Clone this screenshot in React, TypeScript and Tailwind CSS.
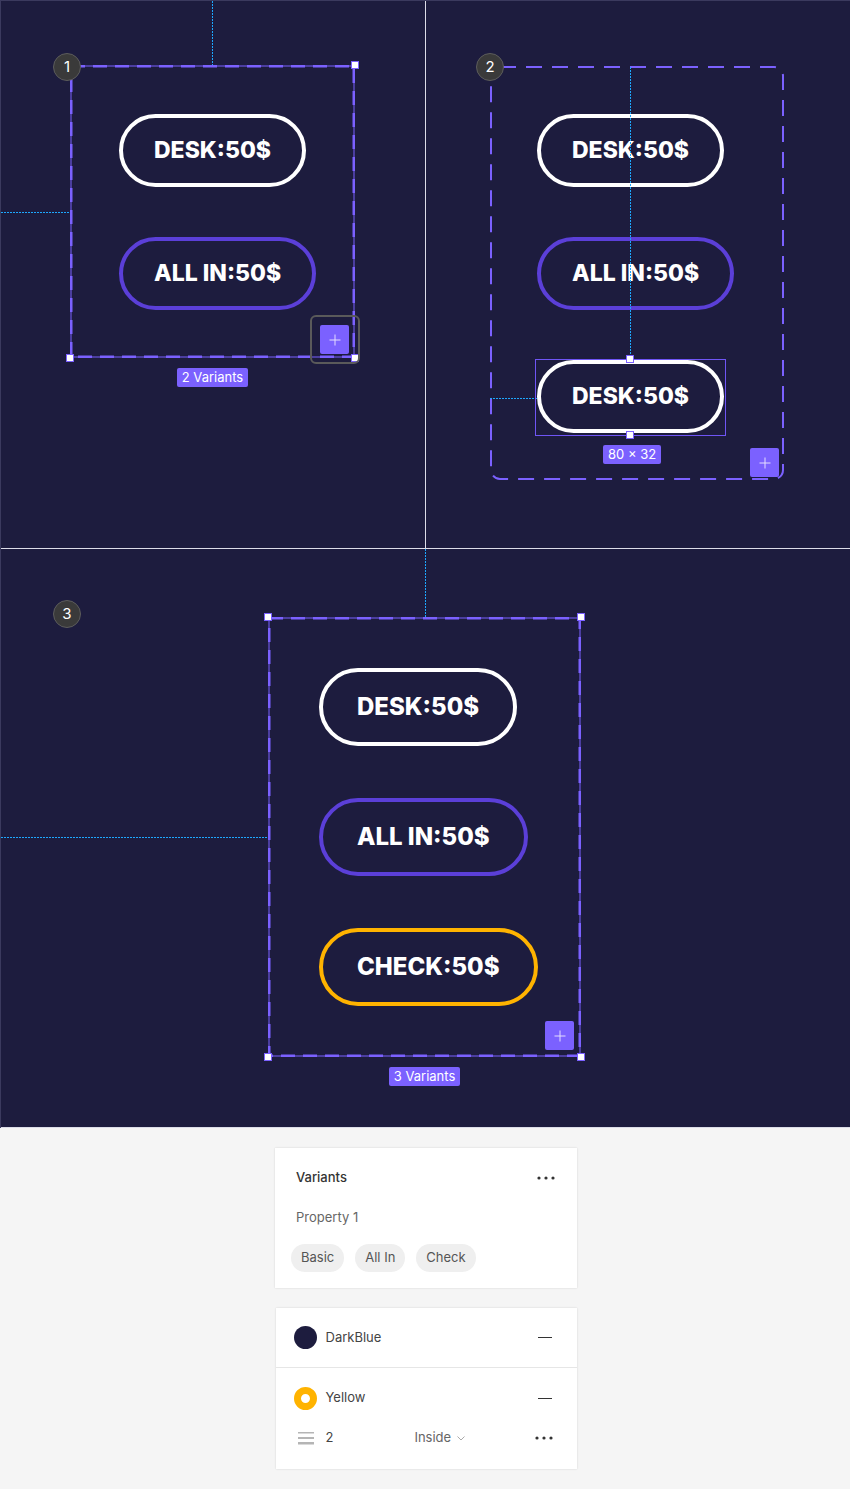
import React from 'react'

const PURPLE = '#7b61ff'

function Pill({ label, tone, big }: { label: string; tone: 'white' | 'purple' | 'yellow'; big?: boolean }) {
  const border =
    tone === 'white' ? 'border-white' : tone === 'purple' ? 'border-[#5b3fd8]' : 'border-[#ffb300]'
  return (
    <div
      className={`flex items-center justify-center rounded-full border-4 ${border} ${
        big ? 'h-[78px] px-[34px] text-[24px]' : 'h-[73px] px-[31px] text-[23px]'
      } font-extrabold text-white`}
      style={{ fontFamily: 'Inter, "Open Sans", sans-serif' }}
    >
      {label}
    </div>
  )
}

function Badge({ n, className }: { n: number; className: string }) {
  return (
    <div
      className={`absolute flex h-[28px] w-[28px] items-center justify-center rounded-full border border-[#5c5c5c] bg-[#3a3a3a] text-[15px] text-white ${className}`}
    >
      {n}
    </div>
  )
}

function Handle({ className }: { className: string }) {
  return <div className={`absolute h-[8px] w-[8px] border border-[#7b61ff] bg-white ${className}`} />
}

function PlusBox({ className }: { className: string }) {
  return (
    <div className={`absolute flex h-[29px] w-[29px] items-center justify-center rounded-[2px] bg-[#7b61ff] ${className}`}>
      <svg width="12" height="12" viewBox="0 0 12 12">
        <path d="M6 0.5v11M0.5 6h11" stroke="#e4ddff" strokeWidth="1" />
      </svg>
    </div>
  )
}

function Label({ text, className = '' }: { text: string; className?: string }) {
  return (
    <div className={`flex h-[19px] items-center rounded-[2px] bg-[#7b61ff] px-[5px] text-[13px] text-white ${className}`}>
      {text}
    </div>
  )
}

function DashedOutline({ w, h, rounded, solid }: { w: number; h: number; rounded?: boolean; solid?: boolean }) {
  return (
    <svg className="pointer-events-none absolute inset-0" width={w} height={h}>
      {solid && <rect x={1} y={1} width={w - 2} height={h - 2} fill="none" stroke={PURPLE} strokeWidth={1} />}
      <rect
        x={1}
        y={1}
        width={w - 2}
        height={h - 2}
        rx={rounded ? 9 : 0}
        fill="none"
        stroke={PURPLE}
        strokeWidth={solid ? 3 : 2}
        strokeDasharray={solid ? '14 8' : '16 10'}
      />
    </svg>
  )
}

// dotted cyan measuring guides
function GuideV({ className }: { className: string }) {
  return (
    <div
      className={`absolute w-px bg-[repeating-linear-gradient(to_bottom,#1ea7fd_0_2px,transparent_2px_3px)] ${className}`}
    />
  )
}

function GuideH({ className }: { className: string }) {
  return (
    <div
      className={`absolute h-px bg-[repeating-linear-gradient(to_right,#1ea7fd_0_2px,transparent_2px_3px)] ${className}`}
    />
  )
}

function Dots() {
  return (
    <svg width="18" height="4" viewBox="0 0 18 4">
      <circle cx="2" cy="2" r="1.6" fill="#333" />
      <circle cx="9" cy="2" r="1.6" fill="#333" />
      <circle cx="16" cy="2" r="1.6" fill="#333" />
    </svg>
  )
}

function Minus() {
  return <div className="h-px w-[14px] bg-[#333]" />
}

export default function App() {
  return (
    <div className="w-[850px] bg-[#f5f5f5]" style={{ fontFamily: 'Inter, "Noto Sans", sans-serif' }}>
      {/* canvas */}
      <div className="flex flex-col border-l border-t border-[#3b3a5e] bg-[#1d1c3e]">
        <div className="flex h-[548px] border-b border-[#dcdce8]">
          {/* panel 1 */}
          <div className="relative w-[425px] border-r border-[#dcdce8] pl-[69px] pt-[64px]">
            <GuideV className="left-[211px] top-0 h-[64px]" />
            <GuideH className="left-0 top-[211px] w-[69px]" />
            <div className="flex w-[285px] flex-col items-center gap-[10px]">
              <div className="relative h-[293px] w-[285px]">
                <DashedOutline w={285} h={293} solid />
                <div className="flex flex-col items-start gap-[50px] pl-[49px] pt-[49px]">
                  <Pill label="DESK:50$" tone="white" />
                  <Pill label="ALL IN:50$" tone="purple" />
                </div>
                <Handle className="-right-[4px] -top-[4px]" />
                <Handle className="-bottom-[4px] -left-[4px]" />
                <Handle className="-bottom-[4px] -right-[4px]" />
                <div className="absolute -bottom-[6px] -right-[5px] h-[49px] w-[50px] rounded-[6px] border-2 border-[#5a5a5a]" />
                <PlusBox className="bottom-[4px] right-[6px]" />
              </div>
              <Label text="2 Variants" />
            </div>
            <Badge n={1} className="left-[52px] top-[52px]" />
          </div>

          {/* panel 2 */}
          <div className="relative flex-1 pl-[64px] pt-[65px]">
            <div className="relative h-[414px] w-[294px]">
              <DashedOutline w={294} h={414} rounded />
              <div className="flex flex-col items-start gap-[50px] pl-[47px] pt-[48px]">
                <Pill label="DESK:50$" tone="white" />
                <Pill label="ALL IN:50$" tone="purple" />
                <Pill label="DESK:50$" tone="white" />
              </div>
              <PlusBox className="bottom-[3px] right-[5px]" />
            </div>
            <GuideV className="left-[204px] top-[66px] h-[292px]" />
            <GuideH className="left-[64px] top-[397px] w-[47px]" />
            <div className="absolute left-[109px] top-[358px] h-[77px] w-[191px] border border-[#6f55f5]" />
            <Handle className="left-[200px] top-[354px]" />
            <Handle className="left-[200px] top-[430px]" />
            <Label text="80 × 32" className="absolute left-[177px] top-[444px]" />
            <Badge n={2} className="left-[50px] top-[52px]" />
          </div>
        </div>

        {/* panel 3 */}
        <div className="relative h-[579px] border-b border-[#dcdce8] pl-[267px] pt-[68px]">
          <GuideV className="left-[424px] top-0 h-[68px]" />
          <GuideH className="left-0 top-[288px] w-[267px]" />
          <div className="flex w-[313px] flex-col items-center gap-[10px]">
            <div className="relative h-[440px] w-[313px]">
              <DashedOutline w={313} h={440} solid />
              <div className="flex flex-col items-start gap-[52px] pl-[51px] pt-[51px]">
                <Pill label="DESK:50$" tone="white" big />
                <Pill label="ALL IN:50$" tone="purple" big />
                <Pill label="CHECK:50$" tone="yellow" big />
              </div>
              <Handle className="-left-[4px] -top-[4px]" />
              <Handle className="-right-[4px] -top-[4px]" />
              <Handle className="-bottom-[4px] -left-[4px]" />
              <Handle className="-bottom-[4px] -right-[4px]" />
              <PlusBox className="bottom-[7px] right-[7px]" />
            </div>
            <Label text="3 Variants" />
          </div>
          <Badge n={3} className="left-[52px] top-[51px]" />
        </div>
      </div>

      {/* properties */}
      <div className="flex flex-col items-center gap-[20px] py-[20px] pl-[2px]">
        <div className="h-[140px] w-[302px] bg-white shadow-[0_0_2px_rgba(0,0,0,0.14)]">
          <div className="mt-[20px] flex h-[20px] items-center justify-between pl-[21px] pr-[22px]">
            <span className="text-[13px] font-medium text-[#333]">Variants</span>
            <Dots />
          </div>
          <div className="mt-[20px] flex h-[20px] items-center pl-[21px] text-[13px] text-[#666]">Property 1</div>
          <div className="mt-[16px] flex gap-[11px] pl-[16px]">
            {['Basic', 'All In', 'Check'].map((c) => (
              <span key={c} className="flex h-[28px] items-center rounded-full bg-[#efefef] px-[10px] text-[13px] text-[#555]">
                {c}
              </span>
            ))}
          </div>
        </div>

        <div className="h-[161px] w-[301px] bg-white shadow-[0_0_2px_rgba(0,0,0,0.14)]">
          <div className="flex h-[60px] items-center justify-between border-b border-[#e6e6e6] pl-[18px] pr-[25px]">
            <div className="flex items-center gap-[9px]">
              <div className="h-[23px] w-[23px] rounded-full bg-[#1d1c3e]" />
              <span className="text-[13px] text-[#444]">DarkBlue</span>
            </div>
            <Minus />
          </div>
          <div className="mt-[18px] flex h-[24px] items-center justify-between pl-[18px] pr-[25px]">
            <div className="flex items-center gap-[9px]">
              <div className="h-[23px] w-[23px] rounded-full border-[7px] border-[#ffb300] bg-white" />
              <span className="text-[13px] text-[#444]">Yellow</span>
            </div>
            <Minus />
          </div>
          <div className="mt-[16px] flex h-[24px] items-center pl-[22px] pr-[24px] text-[13px]">
            <svg width="16" height="14" viewBox="0 0 16 14">
              <rect x="0" y="1" width="16" height="1.5" fill="#b5b5b5" />
              <rect x="0" y="6" width="16" height="2" fill="#b5b5b5" />
              <rect x="0" y="11" width="16" height="2.5" fill="#b5b5b5" />
            </svg>
            <span className="ml-[12px] text-[#444]">2</span>
            <span className="ml-[81px] text-[#666]">Inside</span>
            <svg className="ml-[6px]" width="8" height="5" viewBox="0 0 8 5">
              <path d="M0.5 0.5L4 4L7.5 0.5" fill="none" stroke="#aaa" strokeWidth="1" />
            </svg>
            <div className="ml-auto">
              <Dots />
            </div>
          </div>
        </div>
      </div>
    </div>
  )
}
